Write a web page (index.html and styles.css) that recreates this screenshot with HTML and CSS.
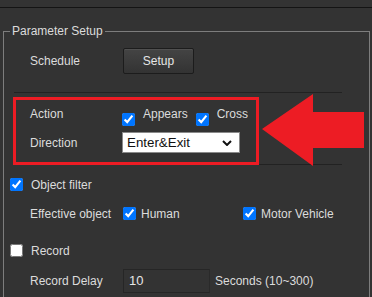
FILE: index.html
```html
<!DOCTYPE html>
<html lang="en">
<head>
    <meta charset="UTF-8">
    <meta name="viewport" content="width=device-width, initial-scale=1.0">
    <title>Parameter Setup</title>
    <link rel="stylesheet" href="styles.css">
</head>
<body>
<div class="page">
    <div class="topbar"></div>

    <fieldset class="param">
        <legend>Parameter Setup</legend>

        <div class="row schedule">
            <span class="label">Schedule</span>
            <button class="btn">Setup</button>
        </div>

        <!-- action / direction rows -->
        <div class="group">
            <div class="row action">
                <span class="label">Action</span>
                <label class="chk"><input type="checkbox" checked>Appears</label>
                <label class="chk"><input type="checkbox" checked>Cross</label>
            </div>
            <div class="row direction">
                <span class="label">Direction</span>
                <span class="sel-wrap">
                    <select class="sel">
                        <option>Enter&amp;Exit</option>
                    </select>
                    <svg class="chevron" width="10" height="6" viewBox="0 0 10 6"><path d="M1 1 L5 5 L9 1" fill="none" stroke="#111" stroke-width="2"/></svg>
                </span>
            </div>
        </div>

        <div class="row top filter">
            <label class="chk"><input type="checkbox" checked>Object filter</label>
        </div>
        <div class="row effective">
            <span class="label">Effective object</span>
            <label class="chk near col"><input type="checkbox" checked>Human</label>
            <label class="chk near"><input type="checkbox" checked>Motor Vehicle</label>
        </div>

        <div class="row top record">
            <label class="chk"><input type="checkbox">Record</label>
        </div>
        <div class="row delay">
            <span class="label">Record Delay</span>
            <input class="num" type="text" value="10">
            <span class="unit">Seconds (10~300)</span>
        </div>
    </fieldset>

    <!-- annotation -->
    <div class="highlight"></div>
    <svg class="arrow" width="102" height="72" viewBox="0 0 102 72">
        <polygon points="0,35 51,0 51,18 102,18 102,54 51,54 51,72" fill="#ed1c24"/>
    </svg>
</div>
</body>
</html>
```

FILE: styles.css
```css
html, body {
    margin: 0;
    height: 100%;
    overflow: hidden;
    background-color: #333333;
}

body {
    font-family: "Liberation Sans", Arial, sans-serif;
    font-size: 12px;
    color: #dcdcdc;
}

.page {
    position: relative;
    height: 100%;
}

.topbar {
    height: 7px;
    border-bottom: 1px solid #141414;
}

.param {
    margin: 16px 2px 0 3px;
    padding: 0 0 40px 0;
    border: 1px solid #7d7d7d;
    min-width: 0;
}

.param legend {
    margin-left: 6px;
    padding: 0 2px;
    line-height: 14px;
    color: #dcdcdc;
}

.row {
    display: flex;
    align-items: center;
    height: 25px;
}

.label {
    width: 92px;
    padding-left: 26px;
    flex-shrink: 0;
}

.chk {
    display: flex;
    align-items: center;
    margin-right: 8px;
}

.chk input {
    width: 13px;
    height: 13px;
    margin: 0 8px 0 0;
    accent-color: #0075ff;
}

.chk.near input {
    margin-right: 5px;
}

.col {
    width: 120px;
    margin-left: 1px;
    margin-right: 0;
}

.schedule {
    height: 26px;
    padding: 10px 0 18px;
}

.btn {
    width: 71px;
    height: 26px;
    margin-left: 1px;
    font-family: "Liberation Sans", Arial, sans-serif;
    font-size: 12px;
    color: #e6e6e6;
    background: linear-gradient(#444444, #333333);
    border: 1px solid #1c1c1c;
    border-radius: 2px;
    box-shadow: inset 0 1px 0 #505050;
}

.group {
    margin: 0 27px 0 10px;
    padding: 8px 0 9px;
    border-top: 1px solid #222222;
    border-bottom: 1px solid #222222;
}

.group .label {
    padding-left: 16px;
}

.action .chk input {
    margin-top: 12px;
}

.direction {
    margin-top: 4px;
}

.sel-wrap {
    position: relative;
    display: inline-block;
    height: 21px;
}

.sel {
    appearance: none;
    width: 118px;
    height: 21px;
    padding: 0 0 0 4px;
    font-family: "Liberation Sans", Arial, sans-serif;
    font-size: 13.33px;
    color: #111;
    background: #ffffff;
    border: 1px solid #8a8a8a;
    border-radius: 0;
}

.chevron {
    position: absolute;
    right: 8px;
    top: 8px;
}

.top {
    padding-left: 6px;
}

.filter {
    margin-top: 7px;
}

.effective {
    margin-top: 4px;
}

.record {
    margin-top: 12px;
}

.delay {
    margin-top: 5px;
}

.num {
    width: 87px;
    height: 24px;
    box-sizing: border-box;
    margin: 0 5px 0 1px;
    padding: 0 5px;
    font-family: "Liberation Sans", Arial, sans-serif;
    font-size: 13px;
    color: #e6e6e6;
    background: #333333;
    border: 1px solid #262626;
    border-right-color: #2a2a2a;
}

.highlight {
    position: absolute;
    left: 13px;
    top: 97px;
    width: 246px;
    height: 68px;
    box-sizing: border-box;
    border: 3px solid #ed1c24;
}

.arrow {
    position: absolute;
    left: 262px;
    top: 94px;
}
```
